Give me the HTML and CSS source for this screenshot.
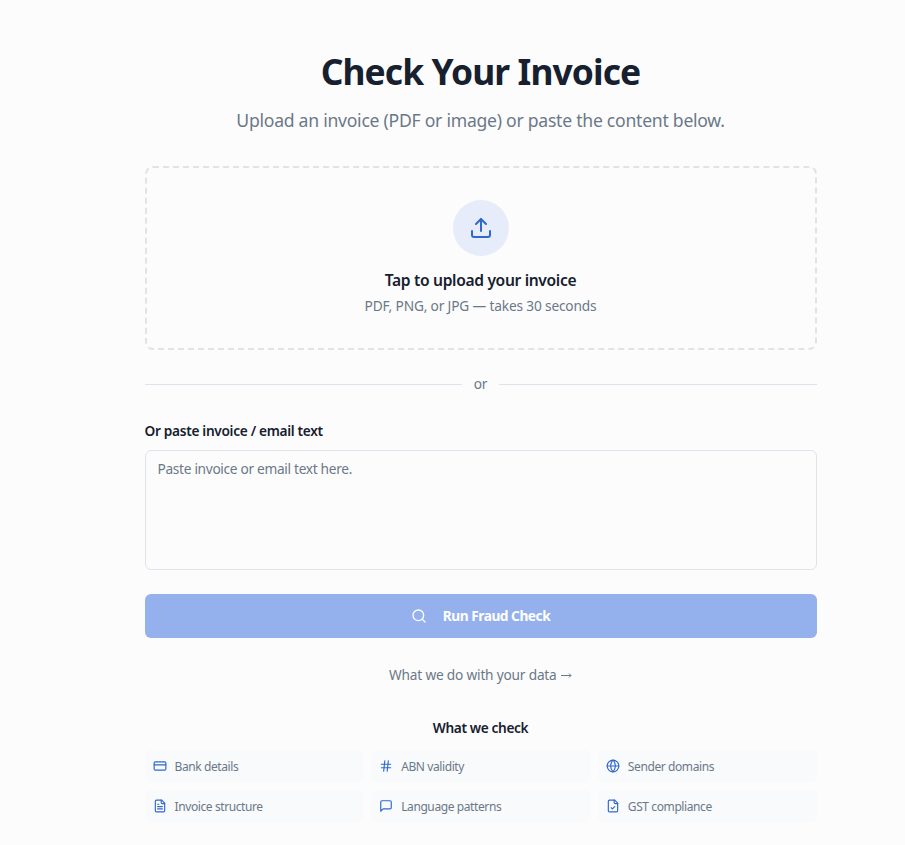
FILE: index.html
```html
<!DOCTYPE html>
<html lang="en">
<head>
    <meta charset="UTF-8">
    <meta name="viewport" content="width=device-width, initial-scale=1.0">
    <title>Check Your Invoice</title>
    <link rel="stylesheet" href="styles.css">
</head>
<body>

    <main class="container">
        <header class="page-header">
            <h1>Check Your Invoice</h1>
            <p class="subtitle">Upload an invoice (PDF or image) or paste the content below.</p>
        </header>

        <div class="upload-box">
            <div class="upload-icon">
                <svg class="icon" width="24" height="24" viewBox="0 0 24 24">
                    <path d="M12 3v12"/>
                    <path d="m17 8-5-5-5 5"/>
                    <path d="M21 15v4a2 2 0 0 1-2 2H5a2 2 0 0 1-2-2v-4"/>
                </svg>
            </div>
            <p class="upload-title">Tap to upload your invoice</p>
            <p class="upload-hint">PDF, PNG, or JPG — takes 30 seconds</p>
        </div>

        <div class="divider"><span>or</span></div>

        <label class="paste-label" for="invoice-text">Or paste invoice / email text</label>
        <textarea id="invoice-text" placeholder="Paste invoice or email text here."></textarea>

        <button class="run-button" disabled>
            <svg class="icon" width="16" height="16" viewBox="0 0 24 24">
                <circle cx="11" cy="11" r="8"/>
                <path d="m21 21-4.3-4.3"/>
            </svg>
            <span>Run Fraud Check</span>
        </button>

        <a class="data-link">What we do with your data <svg class="arrow" width="11" height="7" viewBox="0 0 11 7"><path d="M0 3.5h10M8 1.5l2 2-2 2"/></svg></a>

        <h2>What we check</h2>
        <div class="checks">
            <div class="check">
                <svg class="icon" width="14" height="14" viewBox="0 0 24 24">
                    <rect x="2" y="5" width="20" height="14" rx="2"/>
                    <path d="M2 10h20"/>
                </svg>
                <span>Bank details</span>
            </div>
            <div class="check">
                <svg class="icon" width="14" height="14" viewBox="0 0 24 24">
                    <path d="M4 9h16M4 15h16M10 3 8 21M16 3l-2 18"/>
                </svg>
                <span>ABN validity</span>
            </div>
            <div class="check">
                <svg class="icon" width="14" height="14" viewBox="0 0 24 24">
                    <circle cx="12" cy="12" r="10"/>
                    <path d="M12 2a14.5 14.5 0 0 0 0 20 14.5 14.5 0 0 0 0-20"/>
                    <path d="M2 12h20"/>
                </svg>
                <span>Sender domains</span>
            </div>
            <div class="check">
                <svg class="icon" width="14" height="14" viewBox="0 0 24 24">
                    <path d="M15 2H6a2 2 0 0 0-2 2v16a2 2 0 0 0 2 2h12a2 2 0 0 0 2-2V7Z"/>
                    <path d="M14 2v4a2 2 0 0 0 2 2h4"/>
                    <path d="M10 9H8M16 13H8M16 17H8"/>
                </svg>
                <span>Invoice structure</span>
            </div>
            <div class="check">
                <svg class="icon" width="14" height="14" viewBox="0 0 24 24">
                    <path d="M21 15a2 2 0 0 1-2 2H7l-4 4V5a2 2 0 0 1 2-2h14a2 2 0 0 1 2 2z"/>
                </svg>
                <span>Language patterns</span>
            </div>
            <div class="check">
                <svg class="icon" width="14" height="14" viewBox="0 0 24 24">
                    <path d="M15 2H6a2 2 0 0 0-2 2v16a2 2 0 0 0 2 2h12a2 2 0 0 0 2-2V7Z"/>
                    <path d="M14 2v4a2 2 0 0 0 2 2h4"/>
                    <path d="m9 15 2 2 4-4"/>
                </svg>
                <span>GST compliance</span>
            </div>
        </div>
    </main>

</body>
</html>
```
FILE: styles.css
```css
* {
    box-sizing: border-box;
}
body {
    margin: 0;
    padding-left: 56.5px;
    background-color: #fcfcfd;
    color: #16202e;
    font-family: "Noto Sans", sans-serif;
    font-size: 13.7px;
    line-height: 20px;
    overflow: hidden;
}
h1, h2, p {
    margin: 0;
}
.container {
    width: 672px;
    margin: 0 88px;
    padding-top: 52px;
}
.page-header {
    text-align: center;
    margin-bottom: 32px;
    white-space: nowrap;
}
h1 {
    font-size: 35.4px;
    line-height: 39px;
    font-weight: 700;
    letter-spacing: -0.9px;
}
.subtitle {
    margin-top: 15px;
    font-size: 17.6px;
    line-height: 28px;
    color: #6b7887;
    letter-spacing: -0.26px;
}
.icon {
    flex-shrink: 0;
    fill: none;
    stroke: currentColor;
    stroke-width: 2;
    stroke-linecap: round;
    stroke-linejoin: round;
}
.upload-box {
    display: flex;
    flex-direction: column;
    align-items: center;
    height: 184px;
    padding-top: 32px;
    border: 2px dashed #e0e3e8;
    border-radius: 8px;
}
.upload-icon {
    display: flex;
    align-items: center;
    justify-content: center;
    width: 56px;
    height: 56px;
    border-radius: 50%;
    background-color: #e6ecf9;
    color: #3068ce;
}
.upload-title {
    margin-top: 12px;
    font-size: 15.6px;
    line-height: 24px;
    font-weight: 600;
    letter-spacing: -0.33px;
}
.upload-hint {
    margin-top: 4px;
    color: #6b7887;
    letter-spacing: -0.16px;
}
.divider {
    display: flex;
    align-items: center;
    gap: 12px;
    margin: 24px 0;
    color: #6b7887;
    letter-spacing: -0.3px;
}
.divider::before,
.divider::after {
    content: "";
    flex: 1;
    height: 1px;
    background-color: #e0e3ec;
}
.paste-label {
    display: block;
    margin-top: 27px;
    font-weight: 600;
    letter-spacing: -0.32px;
}
textarea {
    display: block;
    width: 100%;
    height: 120px;
    margin-top: 9px;
    padding: 8px 12px;
    border: 1px solid #e0e3ec;
    border-radius: 6px;
    background-color: transparent;
    font: inherit;
    letter-spacing: -0.31px;
    resize: none;
}
textarea::placeholder {
    color: #6b7887;
}
.run-button {
    display: flex;
    align-items: center;
    justify-content: center;
    gap: 16px;
    width: 100%;
    height: 44px;
    margin-top: 24px;
    border: 0;
    border-radius: 6px;
    background-color: #95b1ed;
    color: #fff;
    font: inherit;
    font-weight: 700;
    letter-spacing: -0.47px;
}
.data-link {
    display: block;
    margin-top: 27px;
    text-align: center;
    color: #6b7887;
    letter-spacing: -0.2px;
}
.arrow {
    margin-left: 1px;
    vertical-align: 1px;
    fill: none;
    stroke: currentColor;
}
h2 {
    margin-top: 33px;
    font-size: 13.7px;
    font-weight: 600;
    text-align: center;
    letter-spacing: -0.38px;
}
.checks {
    display: grid;
    grid-template-columns: repeat(3, 1fr);
    gap: 8px;
    margin-top: 12px;
}
.check {
    display: flex;
    align-items: center;
    gap: 8px;
    height: 32px;
    padding: 0 8px;
    border-radius: 6px;
    background-color: #f8fafc;
    color: #6b7887;
    font-size: 12px;
    line-height: 16px;
    letter-spacing: -0.4px;
}
.check span {
    padding-top: 2px;
}
.check .icon {
    color: #3068ce;
}
```
